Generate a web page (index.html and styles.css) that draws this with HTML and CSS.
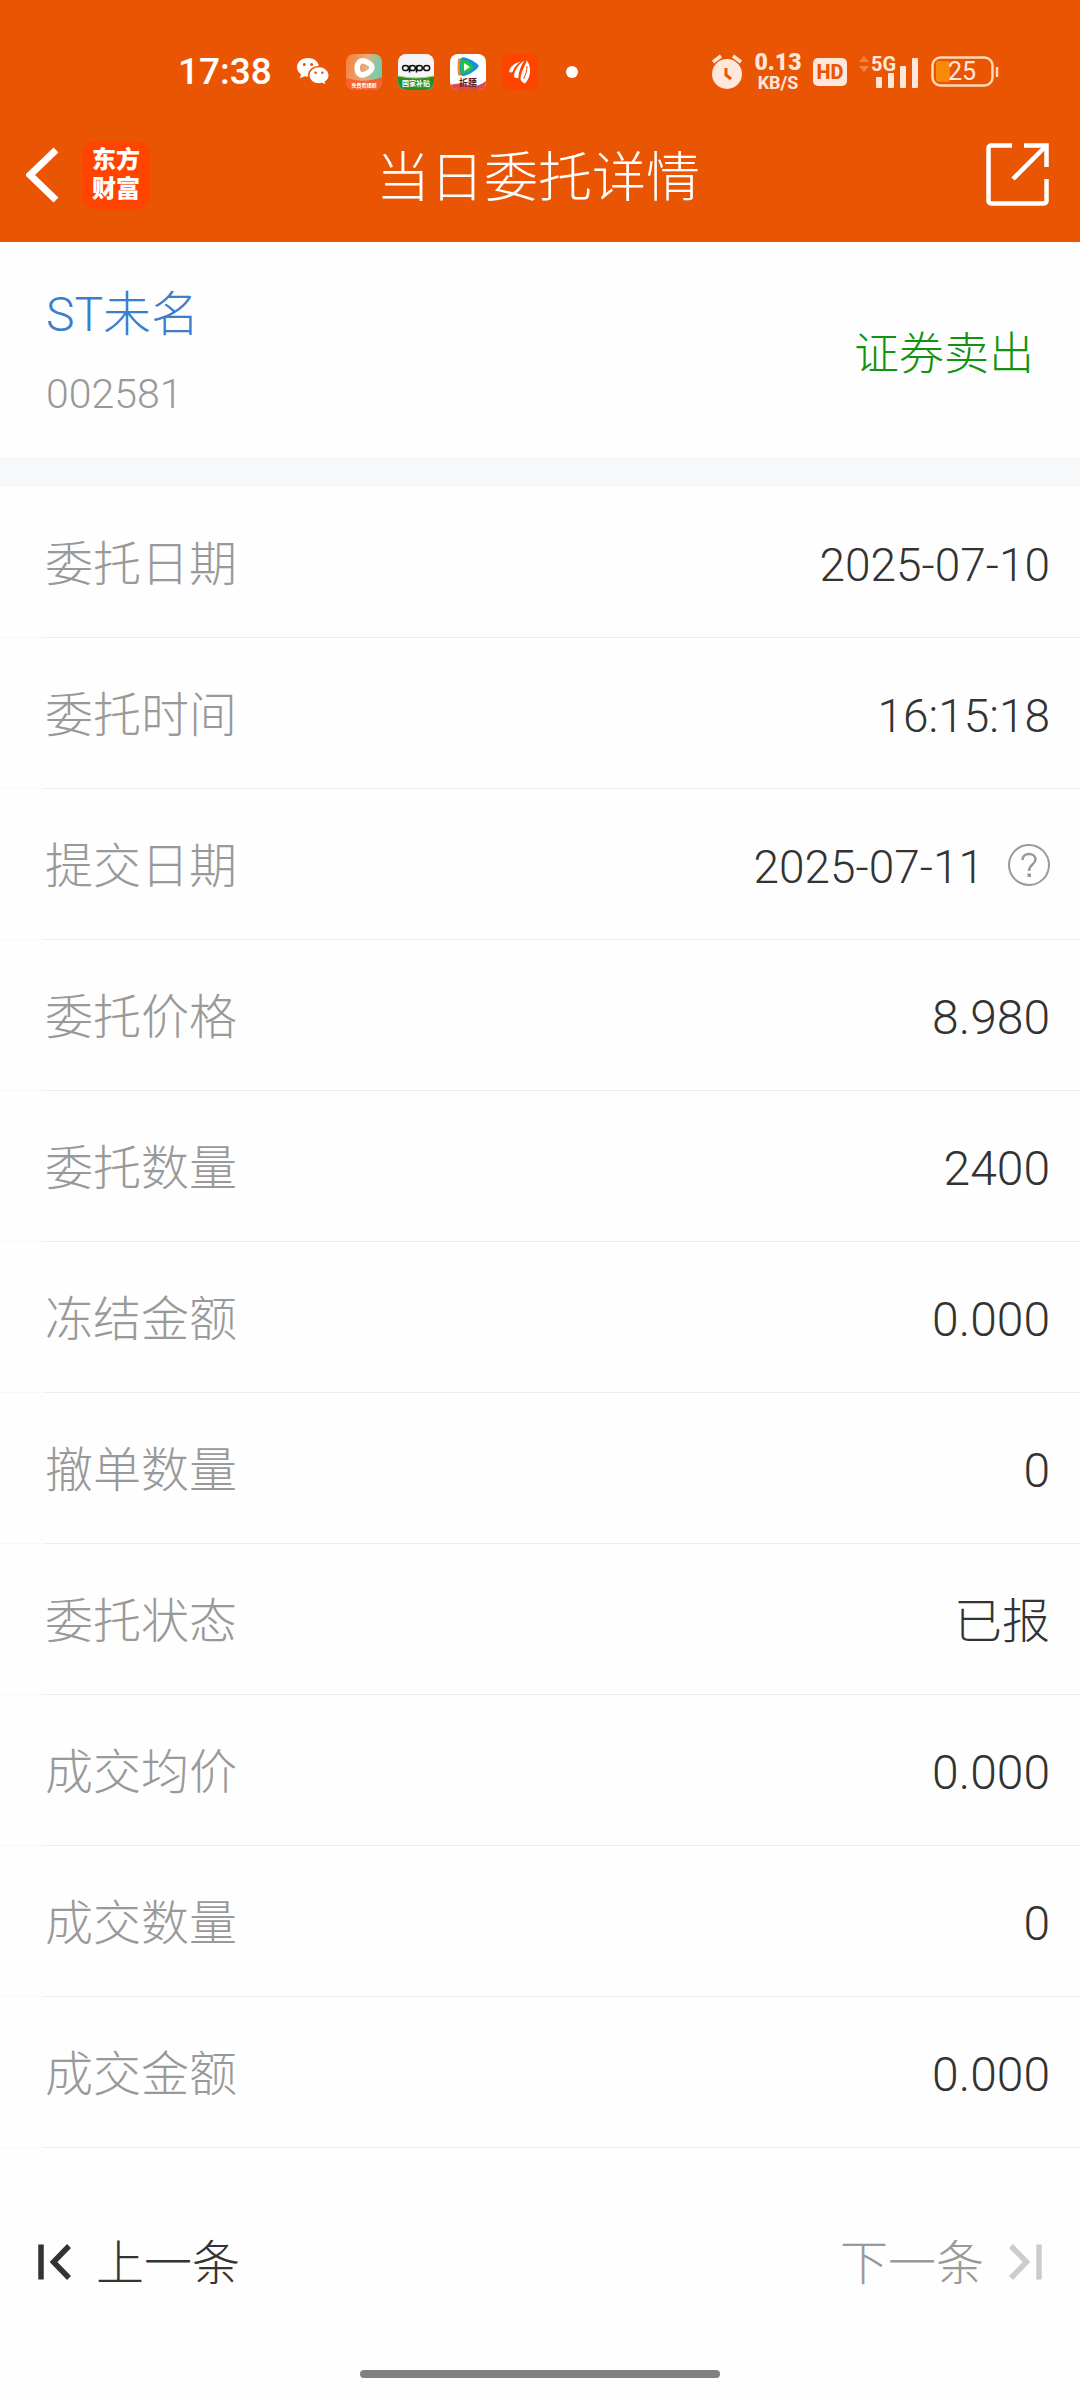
FILE: index.html
```html
<!DOCTYPE html>
<html lang="zh-CN">
<head>
<meta charset="utf-8">
<meta name="viewport" content="width=device-width, initial-scale=1">
<title>当日委托详情</title>
<link rel="stylesheet" href="styles.css">
</head>
<body>
<div class="top">
  <div class="status">
    <div class="status-left">
      <span class="clock">17:38</span>
      <svg class="wechat" width="34" height="30" viewBox="0 0 34 30" aria-hidden="true">
        <path fill="#fff" d="M12 1C5.500 1 1 5.200 1 10.300c0 2.900 1.500 5.300 3.900 7L4 21.500l4.300-2.200c1.200.3 2.400.5 3.700.5C18.500 19.800 23 15.500 23 10.300S18.500 1 12 1z"/>
        <path fill="#fff" stroke="#ea5504" stroke-width="1.500" d="M23 9.600c-5.800 0-10.300 3.900-10.300 8.700s4.500 8.700 10.300 8.700c1.200 0 2.300-.2 3.400-.5l4 2.200-1-3.600c2.300-1.600 3.900-4 3.900-6.800 0-4.800-4.500-8.700-10.300-8.700z"/>
        <g fill="#ea5504"><circle cx="8.300" cy="7.500" r="1.500"/><circle cx="15.600" cy="7.500" r="1.500"/><circle cx="19.600" cy="15.700" r="1.300"/><circle cx="26.300" cy="15.700" r="1.300"/></g>
      </svg>
      <svg class="app" width="36" height="36" viewBox="0 0 36 36" aria-hidden="true">
        <defs><linearGradient id="ga" x1="0" y1="0.300" x2="1" y2="0.500"><stop offset="0" stop-color="#f98241"/><stop offset="0.550" stop-color="#e3ad7c"/><stop offset="1" stop-color="#58d5b9"/></linearGradient><clipPath id="ca"><rect width="36" height="36" rx="8"/></clipPath></defs>
        <g clip-path="url(#ca)"><rect width="36" height="36" fill="url(#ga)"/><path d="M0 24q18 6 36-1v13H0z" fill="#f4622f"/></g>
        <path d="M13.500 8c-3 2.500-3 9-.5 11.500 2.500 2.500 6.500 1 10-1.500s4-5.500 1-8-8-4.500-10.500-2z" fill="none" stroke="#fff" stroke-width="5.500" stroke-linejoin="round"/>
        <text x="18" y="33" class="app-text white">免费看短剧</text>
      </svg>
      <svg class="app" width="36" height="36" viewBox="0 0 36 36" aria-hidden="true">
        <defs><clipPath id="cb"><rect width="36" height="36" rx="8"/></clipPath></defs>
        <g clip-path="url(#cb)"><rect width="36" height="36" fill="#f5f5f5"/><path d="M0 22q18 4 36 0v14H0z" fill="#23902f"/><path d="M0 22q18 4 36 0" fill="none" stroke="#c9c94c"/></g>
        <g fill="none" stroke="#111" stroke-width="1.500"><ellipse cx="7.500" cy="14" rx="3" ry="2.600"/><ellipse cx="14.500" cy="14" rx="2.900" ry="2.600"/><ellipse cx="21.500" cy="14" rx="2.900" ry="2.600"/><ellipse cx="28.700" cy="14" rx="3" ry="2.600"/><path d="M11.500 11.500v7M18.500 11.500v7"/></g>
        <text x="18" y="32" class="app-text medium white">国家补贴</text>
      </svg>
      <svg class="app" width="36" height="36" viewBox="0 0 36 36" aria-hidden="true">
        <defs><clipPath id="cc"><rect width="36" height="36" rx="8"/></clipPath></defs>
        <g clip-path="url(#cc)"><rect width="36" height="36" fill="#fff"/><path d="M0 31q9-3 18 0t18-4v10H0z" fill="#d84b50"/></g>
        <path d="M8 5q3-2 4 1v13q-1 4-4 2-1-8 0-16z" fill="#f68a1c"/>
        <path d="M12 3.500c3-1.500 15 5 16.500 8s-12 11-16 10.500-3-17-.5-18.500z" fill="#168fe8"/>
        <path d="M12 6c3-1 10 3 11 6.500S15 20 12.500 20 10 7 12 6z" fill="#22c33a"/>
        <path d="M14 9l6 4-6 4z" fill="#fff"/>
        <text x="18" y="32" class="app-text large dark">折腰</text>
      </svg>
      <svg class="app" width="36" height="36" viewBox="0 0 36 36" aria-hidden="true">
        <rect width="36" height="36" rx="8" fill="#ff4400"/>
        <g fill="#fff"><path d="M19 7.500C13 9 8.500 12 7 17.500c1 1.500 2.500 1 3.500.5C12 13.500 15 10 19 7.500z"/><path d="M22.500 6.500c-6 4-10 9-10.500 16 1.500 2 3.500 2 4.500 1 0-6 2.500-12 6-17z"/><path d="M24.500 6c1 2.500-5.500 10-6 19 .5 2.500 3 4 4.500 4.500 6-6 7-17 1.500-23.500z"/></g>
        <path d="M25 12c0 5-1.500 9-3.500 13" fill="none" stroke="#ff4400"/>
      </svg>
      <span class="dot"></span>
    </div>
    <div class="status-right">
      <svg width="32" height="36" viewBox="0 0 32 36" aria-hidden="true">
        <circle cx="16" cy="20" r="15" fill="#ffe7da"/>
        <path d="M2 8l8-6M30 8l-8-6" stroke="#ffe7da" stroke-width="3.500"/>
        <path d="M15 14v7l5 4" fill="none" stroke="#ea5504" stroke-width="3"/>
      </svg>
      <span class="speed"><b>0.13</b><span>KB/S</span></span>
      <span class="hd">HD</span>
      <svg class="signal" width="60" height="36" viewBox="0 0 60 36" aria-hidden="true">
        <path d="M0 8l5-6 5 6zM0 12l5 6 5-6z" fill="#f3824a"/>
        <text x="12" y="17" class="net">5G</text>
        <g fill="#ffe7da"><rect x="17" y="23" width="6" height="11" rx="1"/><rect x="29" y="19" width="6" height="15" rx="1"/><rect x="41" y="12" width="6" height="22" rx="1"/><rect x="53" y="4" width="6" height="30" rx="1"/></g>
      </svg>
      <svg width="68" height="32" viewBox="0 0 68 32" aria-hidden="true">
        <rect x="1.500" y="1.500" width="60" height="28" rx="8" fill="none" stroke="#ffd9b8" stroke-width="2.500"/>
        <path d="M66 11v10" stroke="#ffd9b8" stroke-width="2.500"/>
        <rect x="5" y="5" width="14" height="21" rx="3" fill="#f98a08"/>
        <text x="31" y="24" class="level">25</text>
      </svg>
    </div>
  </div>
  <header class="nav">
    <div class="nav-side">
      <button class="icon-button" type="button" aria-label="返回">
        <svg width="34" height="56" viewBox="0 0 34 56"><path d="M30 3L4 28l26 25" fill="none" stroke="#fff" stroke-width="7"/></svg>
      </button>
      <span class="brand">东方<br>财富</span>
    </div>
    <h1 class="title">当日委托详情</h1>
    <div class="nav-side end">
      <button class="icon-button" type="button" aria-label="分享">
        <svg width="64" height="64" viewBox="0 0 64 64"><path d="M26 2.500H5a2.500 2.500 0 0 0-2.500 2.500v53A2.500 2.500 0 0 0 5 60.500h53a2.500 2.500 0 0 0 2.500-2.500V36M38 2.500h22.500V24M60.500 2.500L27 36" fill="none" stroke="#fff" stroke-width="4.500"/></svg>
      </button>
    </div>
  </header>
</div>
<main>
  <section class="stock">
    <div>
      <a class="stock-name" href="#">ST未名</a>
      <div class="stock-code">002581</div>
    </div>
    <div class="side">证券卖出</div>
  </section>
  <dl class="rows">
    <div class="row"><dt>委托日期</dt><dd class="datetime">2025-07-10</dd></div>
    <div class="row"><dt>委托时间</dt><dd class="datetime">16:15:18</dd></div>
    <div class="row"><dt>提交日期</dt><dd class="datetime">2025-07-11
      <button class="icon-button help" type="button" aria-label="说明">
        <svg width="42" height="42" viewBox="0 0 42 42"><circle cx="21" cy="21" r="20" fill="none" stroke="#999" stroke-width="2"/><path d="M14.500 16c0-4 3-6 6.500-6s6.500 2 6.500 5.500c0 5-6.500 5-6.500 11.500" fill="none" stroke="#999" stroke-width="2.500"/><rect x="19.500" y="29.500" width="3.500" height="3.500" fill="#999"/></svg>
      </button></dd></div>
    <div class="row"><dt>委托价格</dt><dd>8.980</dd></div>
    <div class="row"><dt>委托数量</dt><dd>2400</dd></div>
    <div class="row"><dt>冻结金额</dt><dd>0.000</dd></div>
    <div class="row"><dt>撤单数量</dt><dd>0</dd></div>
    <div class="row"><dt>委托状态</dt><dd>已报</dd></div>
    <div class="row"><dt>成交均价</dt><dd>0.000</dd></div>
    <div class="row"><dt>成交数量</dt><dd>0</dd></div>
    <div class="row"><dt>成交金额</dt><dd>0.000</dd></div>
  </dl>
</main>
<footer class="pager">
  <button class="page-button" type="button">
    <svg width="34" height="36" viewBox="0 0 34 36" aria-hidden="true"><path d="M3 .5v35M31 2L15.500 18 31 34" fill="none" stroke="#333" stroke-width="5.500"/></svg>
    <span class="page-label">上一条</span>
  </button>
  <button class="page-button" type="button" disabled>
    <span class="page-label">下一条</span>
    <svg width="34" height="36" viewBox="0 0 34 36" aria-hidden="true"><path d="M31 .5v35M3 2l15.500 16L3 34" fill="none" stroke="#ccc" stroke-width="5.500"/></svg>
  </button>
</footer>
<div class="home"><span class="home-bar"></span></div>
</body>
</html>
```

FILE: styles.css
```css
* {
  box-sizing: border-box;
}

body {
  margin: 0;
  min-height: 100vh;
  display: flex;
  flex-direction: column;
  background: #fefefe;
  color: #333;
  font-family: Roboto, "Noto Sans CJK SC", sans-serif;
  font-weight: 300;
  font-size: 48px;
  line-height: 72px;
}

button {
  padding: 0;
  border: 0;
  background: none;
  color: inherit;
  font: inherit;
}

svg {
  display: block;
  flex: none;
}

.top {
  background: #ea5504;
  color: #fff;
}

.status {
  display: flex;
  justify-content: space-between;
  padding: 36px 81px 0 178px;
}

.status-left,
.status-right {
  display: flex;
  align-items: center;
  height: 72px;
}

.status-left {
  gap: 16px;
}

.clock {
  min-width: 102px;
  font-size: 37px;
  font-weight: 500;
}

.dot {
  width: 12px;
  height: 12px;
  margin-left: 12px;
  border-radius: 50%;
  background: #fff;
}

.app-text {
  font-size: 5px;
  font-weight: 700;
  text-anchor: middle;
}

.medium {
  font-size: 7px;
}

.large {
  font-size: 9px;
}

.white {
  fill: #fff;
}

.dark {
  fill: #5a1f1f;
}

.status-right {
  gap: 12px;
}

.speed {
  display: flex;
  flex-direction: column;
  align-items: center;
  width: 46px;
  font-size: 18px;
  font-weight: 700;
  line-height: 18px;
  color: #ffe7da;
}

.speed b {
  font-size: 23px;
  line-height: 22px;
}

.hd {
  width: 34px;
  border-radius: 5px;
  background: #ffe7da;
  color: #ea5504;
  font-size: 20px;
  font-weight: 800;
  line-height: 28px;
  text-align: center;
}

.signal {
  overflow: visible;
}

.net {
  font-size: 20px;
  font-weight: 700;
  fill: #ffe7da;
}

.level {
  font-size: 25px;
  font-weight: 400;
  text-anchor: middle;
  fill: #ffe7da;
}

.nav {
  display: flex;
  align-items: center;
  height: 134px;
  padding: 0 30px 0 26px;
}

.nav-side {
  flex: 1;
  display: flex;
  align-items: center;
  gap: 22px;
}

.end {
  justify-content: flex-end;
}

.brand {
  width: 68px;
  height: 68px;
  padding-top: 5px;
  border-radius: 14px;
  background: #ff4400;
  font-size: 24px;
  font-weight: 900;
  line-height: 29px;
  text-align: center;
}

.title {
  margin: 0;
  padding-top: 8px;
  font-size: 54px;
  font-weight: 300;
}

.stock {
  display: flex;
  align-items: center;
  justify-content: space-between;
  padding: 37px 46px 26px;
  border-bottom: 30px solid #f6f8fa;
}

.stock-name {
  display: block;
  color: #3c7dcc;
  font-size: 48px;
  line-height: 72px;
  text-decoration: none;
}

.stock-code {
  padding-top: 6px;
  color: #999;
  font-size: 41px;
  line-height: 74px;
}

.side {
  color: #11930f;
  font-size: 45px;
}

.rows {
  margin: 0;
}

.row {
  display: flex;
  align-items: center;
  justify-content: space-between;
  height: 151px;
  padding: 4px 30px 0 45px;
  background: linear-gradient(90deg, #f7f7f7 45px, #ececec 45px) bottom / 100% 1px no-repeat;
}

dt {
  color: #999;
}

dd {
  display: flex;
  align-items: center;
  gap: 24px;
  margin: 0;
}

.datetime {
  font-size: 46px;
}

.help {
  padding-bottom: 4px;
}

.pager {
  display: flex;
  justify-content: space-between;
  padding: 76px 38px 60px;
}

.page-button {
  display: flex;
  align-items: center;
  gap: 24px;
}

.page-label {
  padding-top: 4px;
}

.page-button:disabled {
  color: #999;
}

.home {
  display: flex;
  justify-content: center;
  margin-top: auto;
  padding-bottom: 22px;
}

.home-bar {
  width: 33.333%;
  height: 8px;
  border-radius: 4px;
  background: #808080;
}
```
